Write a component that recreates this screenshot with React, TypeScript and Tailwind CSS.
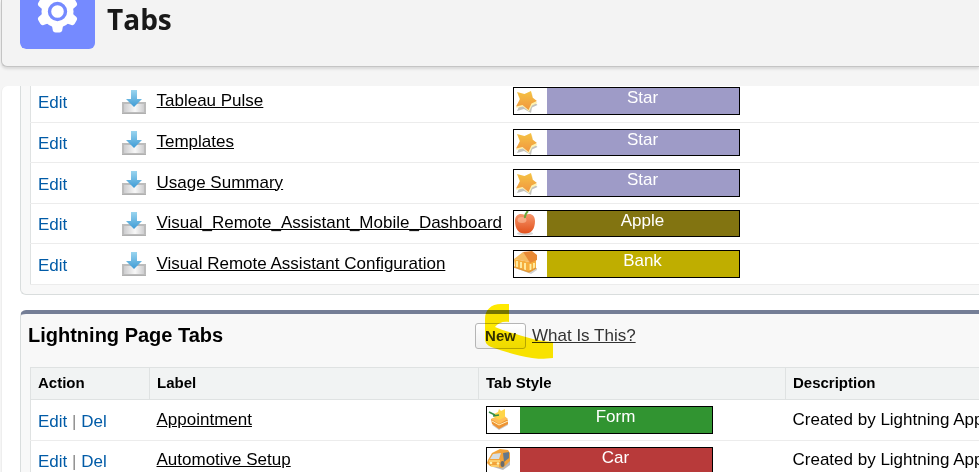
import type { ReactNode } from "react";

type IconName = "star" | "apple" | "bank" | "form" | "car";

function GearIcon() {
  return (
    <svg viewBox="0 0 75 75" className="size-full" aria-hidden="true">
      <g fill="#fff">
        <circle cx="37.5" cy="37.5" r="16" />
        {[0, 60, 120].map((angle) => (
          <path
            key={angle}
            transform={`rotate(${angle} 37.5 37.5)`}
            d="M35.500 16.500h4q2.200 0 2.700 2.200l1 5.300v27l-1 5.300q-.5 2.200-2.700 2.200h-4q-2.200 0-2.700-2.200l-1-5.300V24l1-5.300q.5-2.200 2.700-2.200z"
          />
        ))}
      </g>
      <circle cx="37.5" cy="37.5" r="8" fill="#fff" stroke="#758aff" strokeWidth="3.4" />
    </svg>
  );
}

function InstallIcon() {
  return (
    <svg viewBox="0 0 24 25" className="block h-[25px] w-6" role="img" aria-label="Installed">
      <defs>
        <linearGradient id="tray" x1="0" x2="1">
          <stop offset="0" stopColor="#c9c9cb" />
          <stop offset=".55" stopColor="#f8f8f8" />
          <stop offset="1" stopColor="#c9c9cb" />
        </linearGradient>
        <linearGradient id="arrow" x1="0" x2="0" y1="0" y2="1">
          <stop offset="0" stopColor="#9ad5ef" />
          <stop offset="1" stopColor="#3f9bd5" />
        </linearGradient>
      </defs>
      <rect x="1" y="13" width="22" height="10" fill="url(#tray)" stroke="#bcbcbc" strokeWidth="2" />
      <path d="M0 23.500h24" stroke="#b0b0b0" />
      <path d="M9 0h6v9h5l-8 8-8-8h5z" fill="url(#arrow)" />
    </svg>
  );
}

const drawings: Record<IconName, ReactNode> = {
  star: (
    <>
      <path d="M5 7l7 1.500 6-3 1 7 4.500 4.500-5.500 2.500L17 25l-7-4-7 2 4-9z" fill="#9a9a92" opacity=".6" />
      <path d="M3.500 5.500l7.500 2 6.500-3L19 11.500l4.500 3.500-5.500 2.500L15 23.500l-6-5L2 20l4-7z" fill="#fff3b0" />
      <path d="M3 4l7.500 2L17 3l1.500 6.500L23 13l-5.500 2.500L14.500 22l-6-5L2 18.500 6 11z" fill="url(#gold)" />
    </>
  ),
  apple: (
    <>
      <ellipse cx="11" cy="22.500" rx="8" ry="1.700" fill="#aaa" opacity=".5" />
      <path d="M11 4C6 1.500 1 3.500 1 10c0 8 3.500 12.500 10 12.500S21 18 21 10c0-6.500-5-8.500-10-6z" fill="url(#apple)" />
      <ellipse cx="8" cy="9" rx="4.500" ry="3" fill="#ffd0b0" opacity=".5" />
      <path d="M11 7c-.5-3 1-5 3-7" stroke="#6aa63c" strokeWidth="2" fill="none" />
    </>
  ),
  bank: (
    <>
      <path d="M4 18l13 5 6-4v-2z" fill="#999" opacity=".45" />
      <path d="M0 8l16 3 6-3v9l-6 4-15-5z" fill="#f6ae3c" />
      <path d="M0 8L9 1l6 7v3z" fill="#f6bd62" />
      <path d="M9 1l9-1 5 4v5l-7 3-3-5z" fill="#e98a35" />
      <path d="M3 10v6M7 11v6M11 12v7M16.500 13v6M20 12v6" stroke="#fff0a8" strokeWidth="1.800" />
      <path d="M0 16l15 5 7-4" stroke="#e39a38" strokeWidth="1.500" fill="none" />
    </>
  ),
  form: (
    <>
      <path d="M5 18l7 5 9-5v-4z" fill="#888" opacity=".45" />
      <path d="M4 12l12-3 5 4v4l-9 5-7-5z" fill="#ee9333" />
      <path d="M4 12l11-5 6 5-9 5z" fill="#ffbd58" />
      <path d="M5 14l7 4 9-4" stroke="#fff1bc" fill="none" />
      <path d="M7 7l4-2 1-3 2 2 4-2v8l-6 3-5-3z" fill="#ffd548" />
      <path d="M2 5l6 3M6 9l6-1" stroke="#378d43" strokeWidth="1.600" />
    </>
  ),
  car: (
    <>
      <path d="M3 18l13 4 7-5v-6z" fill="#777" opacity=".5" />
      <path d="M1 12L5 5l8-4 8 1 2 3v8l-5 5-3 2-12-2-3-3z" fill="#f2a33a" />
      <path d="M3 11l3-5 8-1-2 6z" fill="#d6dde2" />
      <path d="M16 5l6-1v6l-5 4z" fill="#65798c" />
      <path d="M2 13h11M4 18h8" stroke="#ffda79" strokeWidth="1.500" />
      <ellipse cx="15.500" cy="16" rx="2" ry="3" fill="#686b6e" />
      <circle cx="4" cy="15" r="1.300" fill="#fff4b0" />
      <circle cx="11" cy="15.500" r="1.300" fill="#fff4b0" />
    </>
  ),
};

function TabStyle({ icon, name, color }: { icon: IconName; name: string; color: string }) {
  return (
    <div className="flex h-7 w-[227px] border border-black bg-white group-even:h-[27px]">
      <svg viewBox="0 0 33 26" className="h-[26px] w-[33px] shrink-0 overflow-hidden" aria-hidden="true">
        <defs>
          <linearGradient id="gold" x1="0" x2="0" y1="0" y2="1">
            <stop offset="0" stopColor="#f5c344" />
            <stop offset="1" stopColor="#f0963f" />
          </linearGradient>
          <linearGradient id="apple" x1="0" x2="0" y1="0" y2="1">
            <stop offset="0" stopColor="#f5966c" />
            <stop offset="1" stopColor="#e2511c" />
          </linearGradient>
        </defs>
        {drawings[icon]}
      </svg>
      <span className={`flex-1 text-center leading-5 text-white ${color}`}>{name}</span>
    </div>
  );
}

const customTabs: { label: string; icon: IconName; style: string; color: string }[] = [
  { label: "Tableau Pulse", icon: "star", style: "Star", color: "bg-[#9e9bc7]" },
  { label: "Templates", icon: "star", style: "Star", color: "bg-[#9e9bc7]" },
  { label: "Usage Summary", icon: "star", style: "Star", color: "bg-[#9e9bc7]" },
  { label: "Visual_Remote_Assistant_Mobile_Dashboard", icon: "apple", style: "Apple", color: "bg-[#827411]" },
  { label: "Visual Remote Assistant Configuration", icon: "bank", style: "Bank", color: "bg-[#bfae00]" },
];

const pageTabs: { label: string; icon: IconName; style: string; color: string }[] = [
  { label: "Appointment", icon: "form", style: "Form", color: "bg-[#319431]" },
  { label: "Automotive Setup", icon: "car", style: "Car", color: "bg-[#b83a3a]" },
];

const rowClass = "group h-[41px] border-b border-[#ececec] even:h-10";
const actionClass = "text-[#015ba7]";
const labelClass = "text-black underline";

export default function App() {
  return (
    <div className="h-screen overflow-hidden bg-[#f5f5f5] font-['Liberation_Sans',Arial,sans-serif] text-[17px] leading-5 text-black">
      <header className="ml-px h-[67px] rounded-bl-md border-b border-l border-[#c4c4c4] bg-[#f3f3f3] pl-[18px] shadow-[0_2px_3px_rgba(0,0,0,0.12)]">
        <div className="flex h-[49px] items-end gap-3 overflow-hidden rounded-b-md">
          <div className="size-[75px] shrink-0 overflow-hidden rounded-md bg-[#758aff]">
            <GearIcon />
          </div>
          <h1 className="pb-2.5 font-['Open_Sans','Noto_Sans',sans-serif] text-[28px] leading-10 font-bold text-[#181818]">
            Tabs
          </h1>
        </div>
      </header>

      <main className="mt-[19px] ml-px overflow-hidden rounded-tl-md border-l border-[#eee] bg-white pl-[18px]">
        <section className="-mt-[5px] rounded-bl-md border-b border-l border-[#d9dddd] bg-[#f8f8f8] pb-[9px] pl-[9px]">
          <table className="w-full table-fixed border-collapse border-l border-[#dfe2e2] bg-white">
            <colgroup>
              <col className="w-[91px]" />
              <col className="w-[28px]" />
              <col className="w-[363px]" />
              <col />
            </colgroup>
            <tbody>
              {customTabs.map((tab) => (
                <tr key={tab.label} className={rowClass}>
                  <td className="pt-1 pl-[7px]">
                    <a href="#edit" className={actionClass}>Edit</a>
                  </td>
                  <td className="pt-0.5">
                    <InstallIcon />
                  </td>
                  <td className="pl-[7px] whitespace-nowrap">
                    <a href="#tab" className={labelClass}>{tab.label}</a>
                  </td>
                  <td className="pt-1.5 align-top">
                    <TabStyle icon={tab.icon} name={tab.style} color={tab.color} />
                  </td>
                </tr>
              ))}
            </tbody>
          </table>
        </section>

        <section className="mt-[15px] rounded-tl-md border-t-4 border-l border-t-[#747e96] border-l-[#d9dddd] bg-[#f8f8f8] pl-[7px]">
          <div className="flex h-[53px] items-start">
            <h2 className="w-[447px] shrink-0 pt-[9px] text-xl leading-6 font-bold">Lightning Page Tabs</h2>
            <div className="relative flex items-center gap-1.5 pt-[9px]">
              <button
                type="button"
                className="h-[26px] w-[51px] rounded-[3px] border border-[#b5b5b5] bg-linear-to-b from-white to-[#efefef] text-[15px] font-bold text-[#333]"
              >
                New
              </button>
              <a href="#help" className="text-[#333] underline">What Is This?</a>
              <svg
                viewBox="475 304 80 56"
                className="pointer-events-none absolute -top-2.5 left-0 h-14 w-20 mix-blend-multiply"
                aria-hidden="true"
              >
                <path
                  d="M509 304h-8c-10 0-16 6-16 15v19c0 5 2 7 6 9 15 5 28 9 41 11 5 1 12 1 21 0v-16c-14-1-25-4-37-8-7-2-14-4-21-7 3-4 8-6 14-5z"
                  fill="#ffe900"
                />
              </svg>
            </div>
          </div>
          <div className="pl-0.5">
            <table className="w-full table-fixed border-collapse border-t border-l border-[#dfe2e2] bg-white">
              <colgroup>
                <col className="w-[119px]" />
                <col className="w-[329px]" />
                <col className="w-[307px]" />
                <col />
              </colgroup>
              <thead>
                <tr className="h-8 border-b border-[#dfe2e2] bg-[#f1f3f3] text-left text-[15px]">
                  <th scope="col" className="pl-[7px]">Action</th>
                  <th scope="col" className="border-l border-[#dfe2e2] pl-[7px]">Label</th>
                  <th scope="col" className="border-l border-[#dfe2e2] pl-[7px]">Tab Style</th>
                  <th scope="col" className="border-l border-[#dfe2e2] pl-[7px]">Description</th>
                </tr>
              </thead>
              <tbody>
                {pageTabs.map((tab) => (
                  <tr key={tab.label} className={rowClass}>
                    <td className="pt-1 pl-[7px] text-[#888]">
                      <a href="#edit" className={actionClass}>Edit</a> | <a href="#del" className={actionClass}>Del</a>
                    </td>
                    <td className="pl-[7px]">
                      <a href="#tab" className={labelClass}>{tab.label}</a>
                    </td>
                    <td className="pt-1.5 pl-[7px] align-top">
                      <TabStyle icon={tab.icon} name={tab.style} color={tab.color} />
                    </td>
                    <td className="overflow-hidden pl-[7px] whitespace-nowrap">Created by Lightning App</td>
                  </tr>
                ))}
              </tbody>
            </table>
          </div>
        </section>
      </main>
    </div>
  );
}
